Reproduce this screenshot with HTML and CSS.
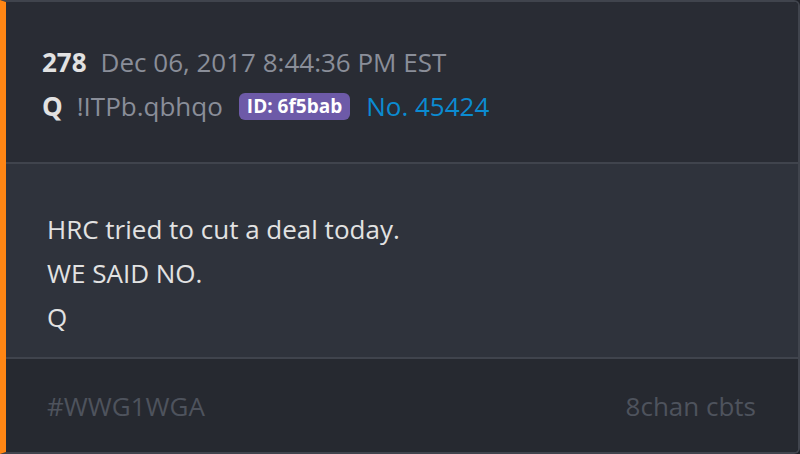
FILE: index.html
```html
<!DOCTYPE html>
<html lang="en">
<head>
  <meta charset="UTF-8" />
  <title>Q Post 278</title>
  <link rel="stylesheet" href="styles.css">
</head>
<body>
  <div class="post">
    <div class="post-header">
      <div class="line">
        <span class="post-num">278</span>
        <span class="post-date">Dec 06, 2017 8:44:36 PM EST</span>
      </div>
      <div class="line">
        <span class="author">Q</span>
        <span class="trip">!ITPb.qbhqo</span>
        <span class="user-id">ID: 6f5bab</span>
        <a class="link-no" href="#">No. 45424</a>
      </div>
    </div>
    <div class="post-body">
      <p>HRC tried to cut a deal today.</p>
      <p>WE SAID NO.</p>
      <p>Q</p>
    </div>
    <div class="post-footer">
      <span>#WWG1WGA</span>
      <span>8chan cbts</span>
    </div>
  </div>
</body>
</html>
```

FILE: styles.css
```css
body {
  margin: 0;
  background-color: #1f2128;
  font-family: "Open Sans", Arial, sans-serif;
  font-size: 26px;
}

.post {
  height: 454px;
  box-sizing: border-box;
  display: flex;
  flex-direction: column;
  border: 2px solid #40444d;
  border-left: 6px solid #ff8614;
  border-radius: 0 6px 6px 0;
  overflow: hidden;
}

.post-header {
  height: 162px;
  box-sizing: border-box;
  padding: 38px 36px 0;
  background-color: #292c34;
  border-bottom: 2px solid #40444d;
}

.line {
  height: 44px;
  display: flex;
  align-items: center;
  gap: 14px;
}

.post-num, .author {
  color: #e2e2e2;
  font-weight: bold;
}

.post-date, .trip {
  color: #8a8e99;
}

.user-id {
  background-color: #6d5aa8;
  color: white;
  font-size: 19px;
  font-weight: bold;
  padding: 0 8px;
  border-radius: 6px;
  line-height: 27px;
  margin-left: 2px;
}

.link-no {
  color: #0b8bd1;
  text-decoration: none;
  margin-left: 2px;
}

.post-body {
  height: 195px;
  box-sizing: border-box;
  padding: 43px 41px 0;
  background-color: #2f333c;
  border-bottom: 2px solid #40444d;
  color: #e2e2e2;
}

.post-body p {
  margin: 0;
  line-height: 44px;
}

.post-footer {
  flex: 1;
  display: flex;
  justify-content: space-between;
  align-items: center;
  padding: 0 42px 0 41px;
  background-color: #262930;
  color: #4e535d;
}
```
